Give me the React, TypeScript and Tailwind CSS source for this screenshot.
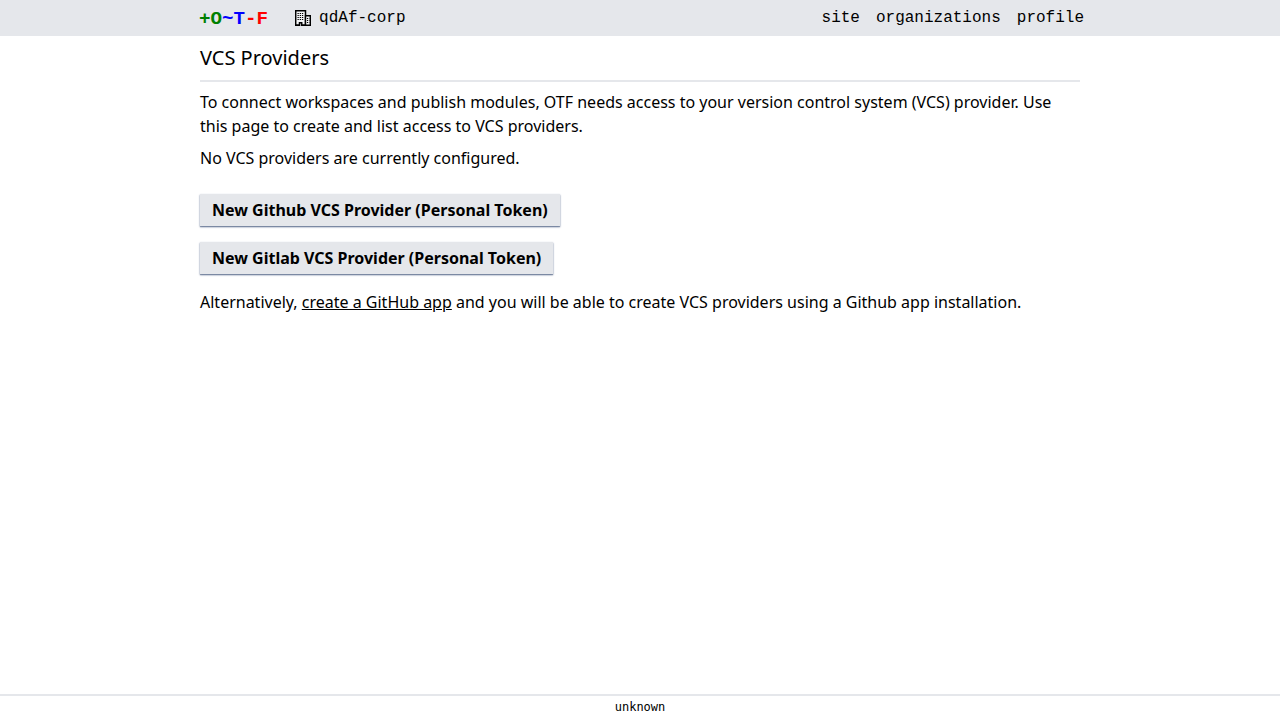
const navLinks = ['site', 'organizations', 'profile'];

function BuildingIcon() {
  return (
    <svg width="16" height="16" viewBox="0 0 16 16" fill="none" stroke="currentColor">
      <path fill="#f3f4f6" strokeWidth="1.5" d="M.7 15.3V.7h9.8v14.6h-3.8v-2.6h-2.2v2.6z" />
      <path fill="#f3f4f6" strokeWidth="1.4" d="M10.5 5.7h4.8v9.6h-4.8zM0 15.3h4.5M6.5 15.3H16" />
      <path strokeWidth="1.2" strokeDasharray="1.3 0.9" d="M2.5 3.5h6.2M2.5 5.5h6.2M2.5 7.5h6.2M2.5 9.5h6.2M11.9 8.5h2.5M11.9 10.5h2.5M11.9 12.5h2.5" />
    </svg>
  );
}

const button =
  'h-8 bg-gray-200 px-3 font-bold shadow-[0_1px_1px_rgba(10,40,80,0.36),0_1px_2px_rgba(20,40,100,0.42)]';

export default function App() {
  return (
    <div className="flex min-h-screen flex-col bg-white font-['Noto_Sans',sans-serif] text-base text-black">
      <header className="flex h-9 justify-center bg-gray-200 font-['Liberation_Mono',monospace]">
        <div className="flex w-[886px] translate-x-px items-center">
          <a className="ml-px pt-0.5 text-[19.2px] font-bold" href="#">
            <span className="text-[green]">+O</span>
            <span className="text-[blue]">~T</span>
            <span className="text-[red]">-F</span>
          </a>
          <a className="ml-[27px] flex items-center gap-2" href="#">
            <BuildingIcon />
            <span>qdAf-corp</span>
          </a>
          <nav className="ml-auto flex gap-4">
            {navLinks.map((link) => (
              <a key={link} href="#">{link}</a>
            ))}
          </nav>
        </div>
      </header>
      <main className="mx-auto flex w-[880px] grow flex-col items-start gap-2 pt-2">
        <h1 className="w-full border-b-2 border-gray-200 pb-2 text-xl">VCS Providers</h1>
        <p>
          To connect workspaces and publish modules, OTF needs access to your version control system (VCS) provider. Use
          this page to create and list access to VCS providers.
        </p>
        <p>No VCS providers are currently configured.</p>
        <div className="mt-4 flex flex-col items-start gap-4">
          <button className={button}>New Github VCS Provider (Personal Token)</button>
          <button className={button}>New Gitlab VCS Provider (Personal Token)</button>
          <p>
            Alternatively, <a className="underline" href="#">create a GitHub app</a> and you will be able to create VCS
            providers using a Github app installation.
          </p>
        </div>
      </main>
      <footer className="h-[26px] border-t-2 border-gray-200 pt-[3px] text-center font-['DejaVu_Sans_Mono',monospace] text-xs">
        unknown
      </footer>
    </div>
  );
}
